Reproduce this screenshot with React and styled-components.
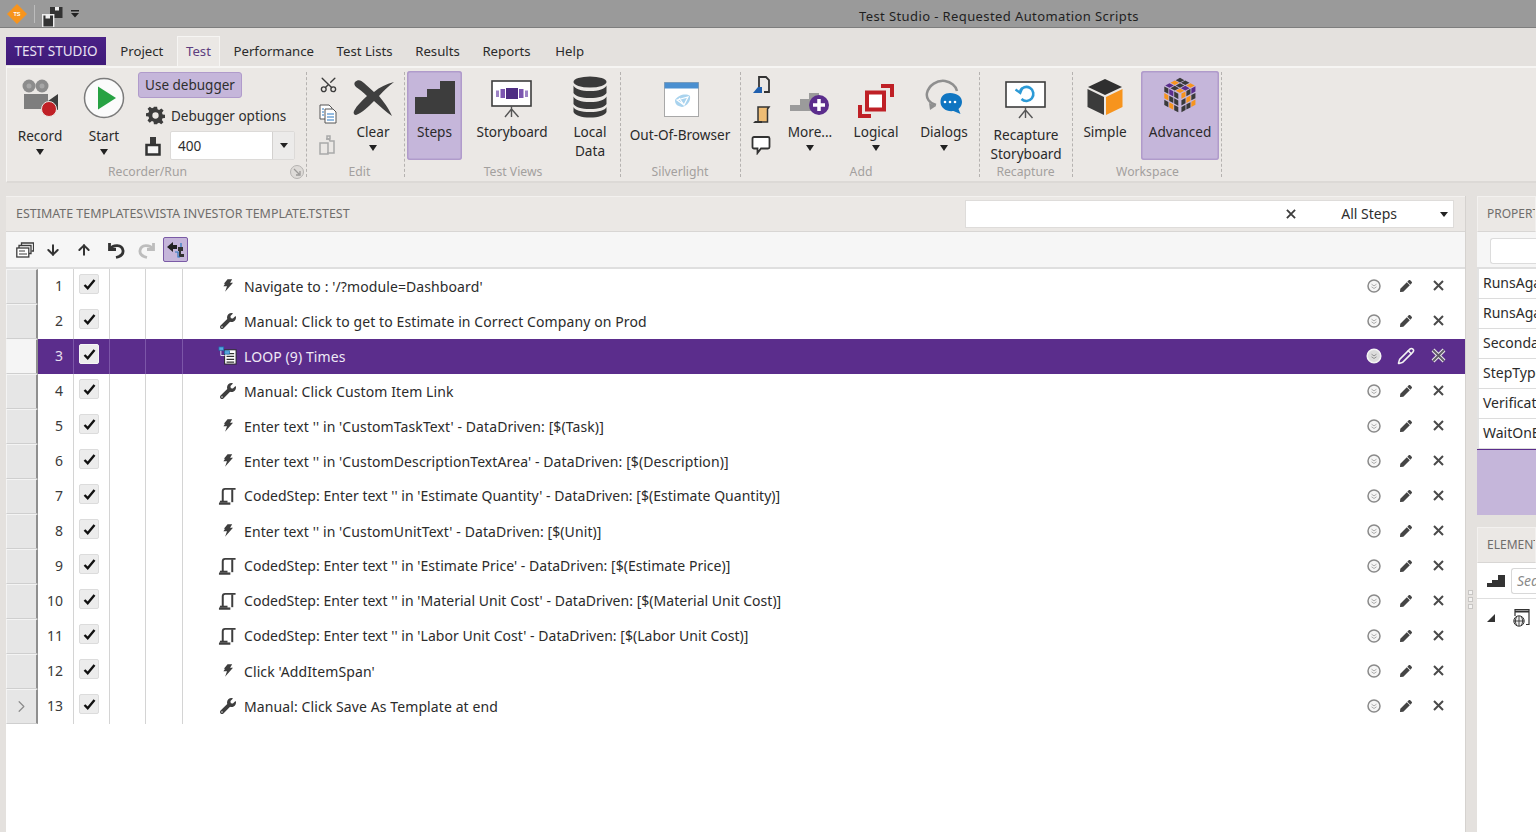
import React from "react";
import styled, { createGlobalStyle } from "styled-components";
import { FaWrench, FaPen } from "react-icons/fa";
import { ArrowDown, ArrowUp, Pencil, Scissors, ChevronRight } from "lucide-react";

const Global = createGlobalStyle`
  html, body { margin: 0; padding: 0; height: 100%; overflow: hidden; }
  body { font-family: "Noto Sans", "Open Sans", sans-serif; color: #2e2e2e; background: #e4e1de; }
  #root { height: 100%; }
`;

const Page = styled.div`height: 832px; width: 1536px; display: flex; flex-direction: column; overflow: hidden; background: #e4e1de;`;

const TitleBar = styled.div`height: 28px; flex: none; box-sizing: border-box; background: #9a9a9a; border-bottom: 1px solid #7e7e7e; display: flex; align-items: center; padding-left: 7px; overflow: hidden;`;
const QuickTools = styled.div`display: flex; align-items: center; gap: 7px; width: 852px; flex: none; height: 100%;`;
const QuickDivider = styled.div`width: 1px; height: 18px; background: #bcbcbc;`;
const SaveSlot = styled.div`display: flex; margin-top: 7px;`;
const Title = styled.div`font-size: 13px; color: #1f1f1f; letter-spacing: 0.4px; white-space: nowrap; margin-top: 4px;`;

const Tabs = styled.div`height: 38px; flex: none; padding: 8px 0 0 6px; box-sizing: border-box; display: flex; align-items: stretch;`;
const AppTab = styled.div`width: 100px; height: 28px; margin-top: 1px; background: linear-gradient(#4a2186, #3f1a78); color: #e9e2f2; font-size: 13.5px; display: flex; align-items: center; justify-content: center; box-sizing: border-box; margin-right: 3px;`;
const Tab = styled.div`height: 30px; box-sizing: border-box; padding: 0 ${p => (p.$active ? 8 : 10.3)}px; margin: 0 ${p => (p.$active ? 2.3 : 0)}px; margin-left: ${p => p.$ml || (p.$active ? 2.3 : 0)}px; font-size: 13.2px; line-height: 29px; white-space: nowrap; color: ${p => (p.$active ? "#5e3f80" : "#2b2b2b")}; background: ${p => (p.$active ? "#ebe8e5" : "transparent")}; border: 1px solid ${p => (p.$active ? "#f6f5f3" : "transparent")}; border-bottom: 0;`;

const Ribbon = styled.div`height: 117px; flex: none; margin: 0 0 0 6px; box-sizing: border-box; background: #ebe8e5; border-top: 2px solid #f6f5f3; border-bottom: 2px solid #dcd9d6; border-left: 1px solid #f6f5f3; display: flex; align-items: stretch;`;
const Group = styled.div`position: relative; width: ${p => p.$w}px; box-sizing: border-box; flex: none; padding: 3px 0 0 ${p => p.$pl || 0}px; display: flex; flex-direction: column; &::after { content: ""; position: absolute; right: 0; top: 4px; bottom: 4px; border-right: 1px dashed #b5b2b0; }`;
const GroupBody = styled.div`display: flex; height: 89px; gap: ${p => p.$gap || 0}px; flex: none;`;
const Caption = styled.div`text-align: center; font-size: 12.2px; color: #a3a09e; line-height: 16px; margin-top: 4px; padding-right: ${p => p.$pr || 0}px; white-space: nowrap;`;
const Launcher = styled.div`position: absolute; right: 3px; bottom: 2px; width: 14px; height: 14px; border-radius: 50%; border: 1px solid #b5b3b1; background: #dedbd8; box-sizing: border-box; display: flex; align-items: center; justify-content: center;`;

const Large = styled.div`width: ${p => p.$w}px; flex: none; height: 89px; box-sizing: border-box; display: flex; flex-direction: column; align-items: center; border-radius: 3px; margin-right: ${p => p.$mr || 0}px; background: ${p => (p.$active ? "#c5b6da" : "transparent")}; box-shadow: ${p => (p.$active ? "inset 0 0 0 1.5px #b09bcb" : "none")};`;
const IconSlot = styled.div`height: ${p => 51 + (p.$drop || 0)}px; flex: none; width: 100%; display: flex; align-items: center; justify-content: center; padding-bottom: ${p => p.$lift || 0}px; padding-top: ${p => p.$sink || 0}px; padding-left: ${p => p.$shift || 0}px; box-sizing: border-box;`;
const Label = styled.div`font-size: 13.6px; line-height: 19px; text-align: center; white-space: nowrap; color: #2a2a2a;`;
const Caret = styled.div`width: 0; height: 0; border-left: 4.5px solid transparent; border-right: 4.5px solid transparent; border-top: 6px solid #222; margin-top: 4px;`;

const SmallColumn = styled.div`width: ${p => p.$w}px; flex: none; display: flex; flex-direction: column; align-items: center; gap: 10px; padding-top: 4px;`;
const DebugColumn = styled.div`width: 160px; display: flex; flex-direction: column; align-items: flex-start; padding-top: 1px;`;
const UseDebugger = styled.div`height: 27px; width: 104px; box-sizing: border-box; background: #c5b6da; border: 1.5px solid #b09bcb; border-radius: 3px; font-size: 13.5px; line-height: 24px; text-align: center;`;
const OptionRow = styled.div`display: flex; align-items: center; gap: 6px; font-size: 13.5px; margin: 7px 0 0 8px; height: 22px; white-space: nowrap;`;
const SpinRow = styled.div`display: flex; align-items: center; gap: 9px; margin: 5px 0 0 7px;`;
const Spin = styled.div`width: 125px; height: 29px; box-sizing: border-box; background: #fff; border: 1px solid #dcdad8; border-radius: 2px; display: flex; font-size: 13.6px; line-height: 27px;`;
const SpinValue = styled.div`flex: 1; padding-left: 7px;`;
const SpinButton = styled.div`width: 21px; background: #ecebea; border-left: 1px solid #d3d1cf; display: flex; align-items: center; justify-content: center;`;
const SmallCaret = styled.div`width: 0; height: 0; border-left: 4px solid transparent; border-right: 4px solid transparent; border-top: 5px solid #222;`;

const Workspace = styled.div`flex: 1; min-height: 0; display: flex; padding: 13px 0 0 6px; gap: 11px;`;
const MainPanel = styled.div`width: 1459px; flex: none; background: #fff; display: flex; flex-direction: column; border-right: 1px solid #d5d2cf;`;
const PanelHead = styled.div`height: 36px; flex: none; box-sizing: border-box; background: #ebe8e5; border-bottom: 1px solid #d8d6d4; display: flex; align-items: center; justify-content: space-between; padding: 0 10px; border-top: 1px solid #f3f1ef;`;
const Path = styled.div`font-size: 12.45px; color: #6f6d6b; white-space: nowrap; margin-top: -2px;`;
const Filter = styled.div`width: 489px; height: 28px; box-sizing: border-box; background: #fff; border: 1px solid #dedcda; display: flex; align-items: center; font-size: 14px; padding-right: 5px; margin-right: 1px;`;
const FilterSpacer = styled.div`flex: 1;`;
const FilterText = styled.div`margin: -1px 43px 0 45px;`;
const Toolbar = styled.div`height: 37px; flex: none; box-sizing: border-box; background: #f6f6f6; border-bottom: 2px solid #dfdfdf; display: flex; align-items: center; padding-left: 8px;`;
const ToolButton = styled.div`width: ${p => p.$w || 31}px; height: 25px; display: flex; align-items: center; justify-content: center; box-sizing: border-box; margin-left: ${p => p.$ml || 0}px; background: ${p => (p.$active ? "#c5b6da" : "transparent")}; border: ${p => (p.$active ? "1.5px solid #7a5aa6" : "0")}; border-radius: 2px;`;

const Rows = styled.div`display: flex; flex-direction: column;`;
const Row = styled.div`height: 35px; display: grid; grid-template-columns: 32px 36px 36px 36px 37px 1fr 100px; color: ${p => (p.$selected ? "#efe9f6" : "#2b2b2b")};`;
const Handle = styled.div`background: ${p => (p.$selected ? "#f5f5f5" : "#e6e6e6")}; border: 1px solid #f4f4f4; border-right: 2px solid #8f8f8f; box-sizing: border-box; border-bottom: 1px solid #cfcfcf; display: flex; align-items: center; justify-content: center; color: #8b8b8b;`;
const Cell = styled.div`box-sizing: border-box; border-right: 1px solid ${p => (p.$selected ? "#7c56a8" : "#d4d4d4")}; background: ${p => (p.$selected ? "#5b2d8c" : "#fff")}; display: flex; align-items: center;`;
const Num = styled(Cell)`justify-content: flex-end; padding: 0 10px 2px 0; font-size: 14px; color: ${p => (p.$selected ? "#e8e0f0" : "#3a3a3a")};`;
const CheckCell = styled(Cell)`justify-content: center; padding-right: 5px;`;
const Box = styled.div`width: 20px; height: 20px; box-sizing: border-box; background: #ececec; border: 1px solid ${p => (p.$selected ? "#f6f6f6" : "#dcdcdc")}; border-radius: 2px; display: flex; align-items: center; justify-content: center; margin-bottom: 5px;`;
const Content = styled.div`background: ${p => (p.$selected ? "#5b2d8c" : "#fff")}; display: flex; align-items: center; padding-left: 35px; font-size: 14px; white-space: nowrap; min-width: 0;`;
const StepIcon = styled.div`width: 19px; height: 20px; display: flex; align-items: center; justify-content: center; margin-right: 7px; margin-bottom: 2px; flex: none;`;
const StepText = styled.div`position: relative; top: ${p => (p.$coded ? -1 : 0)}px; letter-spacing: ${p => (p.$coded ? 0.03 : 0.1)}px;`;
const Actions = styled.div`background: ${p => (p.$selected ? "#5b2d8c" : "#fff")}; display: grid; grid-template-columns: 33px 32px 33px; align-items: center; justify-items: center; padding: 0 10px 2px 0; margin-left: -8px;`;
const Filler = styled.div`flex: 1;`;

const Splitter = styled.div`position: absolute; left: 1468px; top: 590px; display: flex; flex-direction: column; gap: 2px;`;
const Dot = styled.div`width: 5px; height: 5px; box-sizing: border-box; border: 1px solid #c8c6c4; background: #f4f3f2;`;

const Side = styled.div`flex: 1; min-width: 0; display: flex; flex-direction: column; overflow: hidden;`;
const SideHead = styled.div`height: 36px; box-sizing: border-box; flex: none; background: #ebe8e5; border: 1px solid #f3f1ef; border-bottom: 1px solid #d8d6d4; font-size: 12px; line-height: 34px; padding-left: 9px; color: #6f6d6b; white-space: nowrap; overflow: hidden;`;
const SideSearch = styled.div`height: 37px; box-sizing: border-box; flex: none; background: #f6f6f6; border-bottom: 2px solid #dfdfdf; padding: 6px 0 0 13px; display: flex; align-items: flex-start;`;
const SideInput = styled.div`flex: 1; height: 26px; box-sizing: border-box; background: #fff; border: 1px solid #dcdcdc; border-right: 0; border-radius: 3px 0 0 3px;`;
const PropRow = styled.div`height: 30px; box-sizing: border-box; background: #fff; border-bottom: 1px solid #dcdcdc; border-left: 2px solid #e3e3e3; padding-left: 4px; font-size: 14px; line-height: 28px; white-space: nowrap; overflow: hidden; color: #2b2b2b;`;
const PropDesc = styled.div`height: 66px; flex: none; background: #c5b6da; border-top: 1px solid #5b2d8c; box-sizing: border-box;`;
const ElementsGap = styled.div`height: 12px; flex: none;`;
const ElSearch = styled.div`height: 36px; flex: none; box-sizing: border-box; background: #fff; border-bottom: 1px solid #dfdfdf; display: flex; align-items: center; gap: 6px; padding-left: 10px;`;
const ElInput = styled.div`flex: 1; height: 26px; box-sizing: border-box; border: 1px solid #d8d8d8; border-right: 0; border-radius: 3px 0 0 3px; font-size: 14px; font-style: italic; color: #8a8a8a; line-height: 24px; padding-left: 5px; white-space: nowrap; overflow: hidden;`;
const Tree = styled.div`flex: 1; background: #fff; display: flex; padding: 9px 0 0 9px; gap: 16px; align-items: flex-start;`;
const TreeArrowSlot = styled.div`padding-top: 5px; display: flex;`;

const RecordIcon = () => (
  <svg width="42" height="42" viewBox="0 0 42 42">
    <circle cx="10" cy="9" r="6.5" fill="#8c8c8c" /><circle cx="10" cy="9" r="2.5" fill="#a7a7a7" />
    <circle cx="23" cy="9" r="6.5" fill="#8c8c8c" /><circle cx="23" cy="9" r="2.5" fill="#a7a7a7" />
    <rect x="5" y="17" width="24" height="15" fill="#7e7e7e" />
    <path d="M29 24l10-7v16l-10-5z" fill="#3d3d3d" />
    <circle cx="30" cy="32" r="7.5" fill="#c02026" stroke="#e9e6e3" />
  </svg>
);
const StartIcon = () => (
  <svg width="42" height="42" viewBox="0 0 42 42">
    <circle cx="21" cy="21" r="19.5" fill="#fbfbfb" stroke="#7b7b7b" strokeWidth="1.5" />
    <path d="M15 9.5L33 21 15 32.5z" fill="#27a243" />
  </svg>
);
const Gear = () => (
  <svg width="19" height="19" viewBox="0 0 24 24"><path fill="#3c3c3c" fillRule="evenodd" d="M10 1h4l.6 3.2 2 .9L19.4 3l2.8 2.8-2 2.8.8 2 3 .5v4l-3.1.5-.8 2 1.9 2.8-2.8 2.8-2.8-2-2 .8L14 23h-4l-.5-3.1-2-.8-2.8 1.9L1.9 18.2l2-2.8-.8-2L0 13V9l3.1-.6.8-2L2 3.6 4.8.8l2.8 2 2-.8zM12 8a4 4 0 100 8 4 4 0 000-8z" /></svg>
);
const Stamp = () => (
  <svg width="16" height="20" viewBox="0 0 16 20"><rect x="5" y="1" width="6" height="8" fill="#3a3a3a" /><rect x="1.5" y="9" width="13" height="9.5" fill="#f5f5f5" stroke="#333" strokeWidth="2.5" /></svg>
);
const CopyIcon = () => (
  <svg width="20" height="20" viewBox="0 0 20 20"><path d="M2 1h9l3 3v11H2z" fill="#fff" stroke="#555" /><path d="M7 5h8l3 3v11H7z" fill="#fff" stroke="#555" /><path d="M4 5h2M4 8h2M4 11h2M9 10h7M9 13h7M9 16h7" stroke="#2b78c2" strokeWidth="1.2" /></svg>
);
const PasteIcon = () => (
  <svg width="20" height="22" viewBox="0 0 20 22" fill="none" stroke="#a9a9a9" strokeWidth="1.5"><path d="M8 5h3l1 2h4v12H9" /><path d="M9 2h3v3H9z" /><rect x="2" y="9" width="8" height="11" /></svg>
);
const ClearIcon = () => (
  <svg width="42" height="42" viewBox="0 0 42 42"><path d="M2 6c3-3 6-2 9 1l10 9c6-5 12-8 20-10-6 5-11 9-15 14 4 5 9 11 13 20-6-4-12-10-18-15C15 31 9 37 3 39c-2 0-3-2-2-4 3-6 8-10 13-15C10 16 6 13 3 11 1 9 1 7 2 6z" fill="#3f3f3f" /></svg>
);
const StepsIcon = () => (
  <svg width="40" height="33" viewBox="0 0 40 33"><path d="M0 33V16h12V8h13V0h15v33z" fill="#3d3d3d" /></svg>
);
const Storyboard = ({ inner }) => (
  <svg width="42" height="38" viewBox="0 0 42 38">
    <rect x="1" y="1" width="39" height="25" fill="#fff" stroke="#3d3d3d" strokeWidth="1.6" />
    <path d="M20.5 26v3L14 37M20.5 29l7 8M20.5 29v8" stroke="#555" strokeWidth="1.4" fill="none" />
    {inner}
  </svg>
);
const Frames = (
  <g>
    <rect x="15" y="8" width="12" height="11" fill="#4e2d83" />
    <rect x="9.5" y="9" width="4.5" height="9" fill="#7c56b0" /><rect x="28" y="9" width="4.5" height="9" fill="#7c56b0" />
    <rect x="5" y="10.5" width="3" height="6.5" fill="#9d83c5" /><rect x="34" y="10.5" width="3" height="6.5" fill="#9d83c5" />
  </g>
);
const Circular = (
  <g fill="none" stroke="#2c9ad6" strokeWidth="2.6"><path d="M15 10a7 7 0 1 1 1.5 8" /><path d="M10.5 8.5l4.8 3.5 2-5" strokeWidth="2.2" /></g>
);
const DataIcon = () => (
  <svg width="34" height="42" viewBox="0 0 34 42" fill="#3a3a3a">
    <ellipse cx="17" cy="6" rx="16.5" ry="5.5" />
    <path d="M.5 9.5C2 13 8 15 17 15s15-2 16.5-5.5V17c-1.5 3-8 5-16.5 5S2 20 .5 17z" />
    <path d="M.5 20.5C2 24 8 26 17 26s15-2 16.5-5.5V28c-1.5 3-8 5-16.5 5S2 31 .5 28z" />
    <path d="M.5 31C2 34.5 8 36 17 36s15-1.5 16.5-5v5c-1.5 3.5-8 5.5-16.5 5.5S2 39.5.5 36z" />
  </svg>
);
const SilverIcon = () => (
  <svg width="36" height="36" viewBox="0 0 36 36">
    <rect x=".5" y=".5" width="34" height="34" fill="#fff" stroke="#a8a8a8" />
    <rect x=".5" y=".5" width="34" height="6" fill="#4a8fd0" />
    <path d="M11 18c3-5 11-7 15-4 1 5-3 10-8 11-5-1-7-3-7-7z" fill="#a9d3ee" />
    <path d="M13 18l11-3-4 8zM15 16l5 7" stroke="#fff" strokeWidth="1.2" fill="none" />
  </svg>
);
const DocNote = () => (
  <svg width="19" height="20" viewBox="0 0 19 20"><path d="M7 12V2h7l3 3v12h-5" fill="none" stroke="#333" strokeWidth="1.8" /><path d="M1 18l5-6h4v6z" fill="#1f5fae" /></svg>
);
const ScrollColor = () => (
  <svg width="19" height="20" viewBox="0 0 19 20"><path d="M6 2h11l-1.5 2v13H6z" fill="#efbd74" stroke="#333" strokeWidth="1.5" /><path d="M1 18h9v-2H3z" fill="#333" /></svg>
);
const Bubble = () => (
  <svg width="20" height="20" viewBox="0 0 20 20"><path d="M3 2h14a1.5 1.5 0 0 1 1.5 1.5V12a1.5 1.5 0 0 1-1.5 1.5h-7L6.5 18v-4.5H3A1.5 1.5 0 0 1 1.5 12V3.5A1.5 1.5 0 0 1 3 2z" fill="#fff" stroke="#333" strokeWidth="1.8" /></svg>
);
const MoreIcon = () => (
  <svg width="40" height="32" viewBox="0 0 40 32"><path d="M0 26v-6h10v-6h9V8h10v18z" fill="#9b9b9b" /><circle cx="29" cy="20" r="10" fill="#5b2d8c" /><path d="M29 14v12M23 20h12" stroke="#fff" strokeWidth="3.5" /></svg>
);
const LogicalIcon = () => (
  <svg width="38" height="36" viewBox="0 0 38 36">
    <path d="M24 1h13v13h-4V5h-9zM1 22h4v9h9v4H1z" fill="#bf2026" />
    <rect x="10" y="9.5" width="17" height="17" fill="#fff" stroke="#bf2026" strokeWidth="4" />
  </svg>
);
const DialogsIcon = () => (
  <svg width="38" height="38" viewBox="0 0 38 38">
    <path d="M11 26C4 24 1 19 2 14 4 6 12 1 20 2c6 1 11 5 12 10" fill="none" stroke="#8f8f8f" strokeWidth="2.5" />
    <path d="M4 24l1 7 6-4z" fill="#8f8f8f" />
    <path d="M25 14c7 0 12 3.5 12 9 0 3-1.5 5-3.5 7l2 5-7-3c-7 1-13-3-13-9s4-9 9.5-9z" fill="#0f75c1" />
    <circle cx="20" cy="23" r="1.3" fill="#fff" /><circle cx="25" cy="23" r="1.3" fill="#fff" /><circle cx="30" cy="23" r="1.3" fill="#fff" />
  </svg>
);
const SimpleIcon = () => (
  <svg width="38" height="38" viewBox="0 0 38 38">
    <path d="M19 1L36 9 19 17 2 9z" fill="#2f2f2f" />
    <path d="M1.5 11L18 19v18L1.5 29z" fill="#3b3b3b" />
    <path d="M36.5 11L20 19v18l16.5-8z" fill="#f7941d" />
  </svg>
);
const RubikIcon = () => {
  const cells = [];
  const colors = ["#3a3a3a", "#3a3a3a", "#f7941d", "#3a3a3a", "#5b2d8c", "#3a3a3a", "#f7941d", "#3a3a3a"];
  for (let r = 0; r < 3; r++) {
    for (let c = 0; c < 3; c++) {
      cells.push(<path key={`t${r}${c}`} d={`M${19 + (c - r) * 5.5} ${3 + (c + r) * 2.8}l4.5 2.4-4.5 2.4-4.5-2.4z`} fill={colors[(r * 2 + c) % 8]} />);
      cells.push(<path key={`l${r}${c}`} d={`M${2.5 + c * 5.2} ${12 + c * 2.7 + r * 7}l4.3 2.3v5.5l-4.3-2.3z`} fill={colors[(r + c * 3 + 1) % 8]} />);
      cells.push(<path key={`r${r}${c}`} d={`M${20.5 + c * 5.2} ${19.5 - c * 2.7 + r * 7}l4.3-2.3v5.5l-4.3 2.3z`} fill={colors[(r * 3 + c + 2) % 8]} />);
    }
  }
  return <svg width="38" height="40" viewBox="0 0 38 42">{cells}</svg>;
};
const SaveIcon = () => (
  <svg width="21" height="21" viewBox="0 0 21 21">
    <path d="M8 0h12.5v11H8z" fill="#333" /><rect x="13" y="0" width="4" height="3.5" fill="#eee" />
    <path d="M.7 7.7h11v12.6H.7z" fill="#333" stroke="#eee" strokeWidth="1.4" /><rect x="3.5" y="8" width="4.5" height="3.5" fill="#eee" />
  </svg>
);
const LogoIcon = () => (
  <svg width="20" height="20" viewBox="0 0 20 20"><path d="M10 0l10 10-10 10L0 10z" fill="#f7941d" /><text x="10" y="12" fontSize="5.5" fontWeight="700" fill="#fff" textAnchor="middle" fontFamily="Liberation Sans">TS</text></svg>
);
const DropMini = () => (
  <svg width="10" height="8" viewBox="0 0 10 8"><path d="M1 0h8v1.5H1zM1 3h8L5 7.5z" fill="#222" /></svg>
);
const XMark = ({ color = "#3c3c3c", size = 11, sw = 2 }) => (
  <svg width={size} height={size} viewBox="0 0 11 11"><path d="M1 1l9 9M10 1l-9 9" stroke={color} strokeWidth={sw} /></svg>
);
const XOutlined = () => (
  <svg width="15" height="15" viewBox="0 0 15 15"><path d="M2 2l11 11M13 2L2 13" stroke="#e8e8e8" strokeWidth="4" /><path d="M2 2l11 11M13 2L2 13" stroke="#5f5a68" strokeWidth="1.8" /></svg>
);
const Bolt = () => (
  <svg width="10" height="13" viewBox="0 0 12 15"><path d="M5.5 0H11L8.5 4.2H12L2.5 15l2.3-6.5H.5l2-3H1z" fill="#3e3e3e" /></svg>
);
const Coded = () => (
  <svg width="20" height="20" viewBox="0 0 20 20" fill="none" stroke="#3e3e3e" strokeWidth="2.1"><path d="M5 16V5c0-1.5.7-2.5 2.5-2.5h11" /><path d="M15 3v13.5" /><path d="M1 18h12" strokeWidth="2.4" /><path d="M2 16h8" /></svg>
);
const LoopIcon = () => (
  <svg width="21" height="21" viewBox="0 0 20 20"><rect x="7" y="4" width="12" height="15" fill="#fff" stroke="#222" /><path d="M9 8h8M9 11h8M9 14h8M9 17h8" stroke="#333" strokeWidth="1.3" /><rect x="1" y="1" width="5" height="3.5" fill="#58a9e0" stroke="#1e6cab" strokeWidth=".8" /><rect x="7" y="5" width="5" height="3.5" fill="#58a9e0" stroke="#1e6cab" strokeWidth=".8" /><path d="M3 5v5h4" stroke="#dfe9f4" fill="none" /></svg>
);
const Remind = ({ selected }) => (
  <svg width="16" height="16" viewBox="0 0 16 16">
    <circle cx="8" cy="8" r={selected ? 6.8 : 6} fill={selected ? "#dcdcdc" : "#f6f6f6"} stroke={selected ? "#f4f4f4" : "#8a8a8a"} strokeWidth="1.5" />
    <path d="M5.5 6.2L8 7.9l2.5-1.7M5.5 8.8L8 10.5l2.5-1.7" fill="none" stroke={selected ? "#8a8a8a" : "#a6a6a6"} strokeWidth=".9" />
  </svg>
);
const LevelIcon = () => (
  <svg width="18" height="12" viewBox="0 0 18 12"><path d="M0 12V8h5V5h6V0h7v12z" fill="#333" /></svg>
);
const WebIcon = () => (
  <svg width="19" height="19" viewBox="0 0 19 19" fill="none" stroke="#333"><path d="M3 8V1.5h14v15h-3" strokeWidth="1.2" /><path d="M3 3.5h14" strokeWidth="2" /><circle cx="7" cy="13" r="5.2" fill="#eee" /><path d="M2 13h10M7 8v10M4.5 9c-1.5 2.5-1.5 5.5 0 8M9.5 9c1.5 2.5 1.5 5.5 0 8" strokeWidth=".9" /></svg>
);
const TreeArrow = () => (
  <svg width="10" height="10" viewBox="0 0 10 10"><path d="M9 1v8H1z" fill="#333" /></svg>
);
const LevelTool = () => (
  <svg width="20" height="20" viewBox="0 0 20 20"><path d="M1 7l6-5v3h4v4H7v3z" fill="#222" /><path d="M12 7h5v4h-2v3h3v3h-5v-6h-1z" fill="#333" /><path d="M9 12h3v5h2M15 3v4" stroke="#2c78c0" strokeWidth="1.2" fill="none" /></svg>
);
const FramesTool = () => (
  <svg width="18" height="16" viewBox="0 0 18 16" fill="#fff" stroke="#3c3c3c" strokeWidth="1.3"><path d="M5.5 3.5V1h12v8h-2" /><path d="M3 6V3.5h12v8h-2" /><rect x=".8" y="6" width="12" height="9" /><path d="M3 9h6M3 12h8" strokeWidth="1" /></svg>
);
const UndoIcon = ({ color, flip }) => (
  <svg width="20" height="20" viewBox="0 0 20 20" fill="none" stroke={color} strokeWidth="2.8" style={flip ? { transform: "scaleX(-1)" } : undefined}>
    <path d="M3.5 3v6.5H10" /><path d="M4 9c3-4.5 12-5 13 1.5.5 3.5-2.5 6-7 7" />
  </svg>
);

const IconFor = ({ kind }) => {
  if (kind === "bolt") return <Bolt />;
  if (kind === "wrench") return <FaWrench size={16} color="#3e3e3e" />;
  if (kind === "coded") return <Coded />;
  return <LoopIcon />;
};

const steps = [
  ["bolt", "Navigate to : '/?module=Dashboard'"],
  ["wrench", "Manual: Click to get to Estimate in Correct Company on Prod"],
  ["loop", "LOOP (9) Times"],
  ["wrench", "Manual: Click Custom Item Link"],
  ["bolt", "Enter text '' in 'CustomTaskText' - DataDriven: [$(Task)]"],
  ["bolt", "Enter text '' in 'CustomDescriptionTextArea' - DataDriven: [$(Description)]"],
  ["coded", "CodedStep: Enter text '' in 'Estimate Quantity' - DataDriven: [$(Estimate Quantity)]"],
  ["bolt", "Enter text '' in 'CustomUnitText' - DataDriven: [$(Unit)]"],
  ["coded", "CodedStep: Enter text '' in 'Estimate Price' - DataDriven: [$(Estimate Price)]"],
  ["coded", "CodedStep: Enter text '' in 'Material Unit Cost' - DataDriven: [$(Material Unit Cost)]"],
  ["coded", "CodedStep: Enter text '' in 'Labor Unit Cost' - DataDriven: [$(Labor Unit Cost)]"],
  ["bolt", "Click 'AddItemSpan'"],
  ["wrench", "Manual: Click Save As Template at end"],
];

const Step = ({ n, kind, text }) => {
  const selected = n === 3;
  return (
    <Row $selected={selected}>
      <Handle $selected={selected}>{n === 13 && <ChevronRight size={19} strokeWidth={1.5} />}</Handle>
      <Num $selected={selected}>{n}</Num>
      <CheckCell $selected={selected}>
        <Box $selected={selected}>
          <svg width="13" height="11" viewBox="0 0 13 11"><path d="M1.5 6l3.2 3.2L11.5 1" fill="none" stroke="#111" strokeWidth="2.4" /></svg>
        </Box>
      </CheckCell>
      <Cell $selected={selected} />
      <Cell $selected={selected} />
      <Content $selected={selected}>
        <StepIcon><IconFor kind={kind} /></StepIcon>
        <StepText $coded={kind === "coded"}>{text}</StepText>
      </Content>
      <Actions $selected={selected}>
        <Remind selected={selected} />
        {selected ? <Pencil size={18} color="#f2f2f2" strokeWidth={2} /> : <FaPen size={12} color="#454545" />}
        {selected ? <XOutlined /> : <XMark color="#4a4a4a" />}
      </Actions>
    </Row>
  );
};

export default function App() {
  return (
    <Page>
      <Global />
      <TitleBar>
        <QuickTools>
          <LogoIcon />
          <QuickDivider />
          <SaveSlot><SaveIcon /></SaveSlot>
          <DropMini />
        </QuickTools>
        <Title>Test Studio - Requested Automation Scripts</Title>
      </TitleBar>

      <Tabs>
        <AppTab>TEST STUDIO</AppTab>
        <Tab>Project</Tab>
        <Tab $active>Test</Tab>
        <Tab>Performance</Tab>
        <Tab>Test Lists</Tab>
        <Tab>Results</Tab>
        <Tab>Reports</Tab>
        <Tab $ml={2}>Help</Tab>
      </Tabs>

      <Ribbon>
        <Group $w={300} $pl={3}>
          <GroupBody>
            <Large $w={60} $mr={4}>
              <IconSlot $drop={4} $lift={2}><RecordIcon /></IconSlot>
              <Label>Record</Label><Caret />
            </Large>
            <Large $w={60} $mr={4}>
              <IconSlot $drop={4} $lift={2}><StartIcon /></IconSlot>
              <Label>Start</Label><Caret />
            </Large>
            <DebugColumn>
              <UseDebugger>Use debugger</UseDebugger>
              <OptionRow><Gear />Debugger options</OptionRow>
              <SpinRow>
                <Stamp />
                <Spin>
                  <SpinValue>400</SpinValue>
                  <SpinButton><SmallCaret /></SpinButton>
                </Spin>
              </SpinRow>
            </DebugColumn>
          </GroupBody>
          <Caption $pr={22}>Recorder/Run</Caption>
          <Launcher>
            <svg width="8" height="8" viewBox="0 0 8 8"><path d="M1 1l5 5M7 3v4H3" stroke="#9b9997" strokeWidth="1.3" fill="none" /></svg>
          </Launcher>
        </Group>

        <Group $w={98} $pl={8}>
          <GroupBody $gap={7}>
            <SmallColumn $w={26}>
              <Scissors size={19} strokeWidth={1.7} color="#3c3c3c" style={{ transform: "rotate(-90deg)" }} />
              <CopyIcon />
              <PasteIcon />
            </SmallColumn>
            <Large $w={50}>
              <IconSlot $sink={1} $shift={2}><ClearIcon /></IconSlot>
              <Label>Clear</Label><Caret />
            </Large>
          </GroupBody>
          <Caption $pr={1}>Edit</Caption>
        </Group>

        <Group $w={216} $pl={2}>
          <GroupBody>
            <Large $w={55} $active $mr={5}>
              <IconSlot $sink={2}><StepsIcon /></IconSlot>
              <Label>Steps</Label>
            </Large>
            <Large $w={90} $mr={8}>
              <IconSlot $sink={4}><Storyboard inner={Frames} /></IconSlot>
              <Label>Storyboard</Label>
            </Large>
            <Large $w={50}>
              <IconSlot><DataIcon /></IconSlot>
              <Label>Local<br />Data</Label>
            </Large>
          </GroupBody>
          <Caption $pr={2}>Test Views</Caption>
        </Group>

        <Group $w={120} $pl={4}>
          <GroupBody>
            <Large $w={110}>
              <IconSlot $drop={3} $sink={3} $shift={3}><SilverIcon /></IconSlot>
              <Label>Out-Of-Browser</Label>
            </Large>
          </GroupBody>
          <Caption $pr={6}>Silverlight</Caption>
        </Group>

        <Group $w={239} $pl={7}>
          <GroupBody $gap={6}>
            <SmallColumn $w={26}>
              <DocNote />
              <ScrollColor />
              <Bubble />
            </SmallColumn>
            <Large $w={60}>
              <IconSlot $sink={9}><MoreIcon /></IconSlot>
              <Label>More...</Label><Caret />
            </Large>
            <Large $w={60} $mr={2}>
              <IconSlot $sink={8}><LogicalIcon /></IconSlot>
              <Label>Logical</Label><Caret />
            </Large>
            <Large $w={60}>
              <IconSlot $sink={2}><DialogsIcon /></IconSlot>
              <Label>Dialogs</Label><Caret />
            </Large>
          </GroupBody>
          <Caption $pr={6}>Add</Caption>
        </Group>

        <Group $w={93}>
          <GroupBody>
            <Large $w={92}>
              <IconSlot $drop={3} $sink={4}><Storyboard inner={Circular} /></IconSlot>
              <Label>Recapture<br />Storyboard</Label>
            </Large>
          </GroupBody>
          <Caption $pr={2}>Recapture</Caption>
        </Group>

        <Group $w={149} $pl={4}>
          <GroupBody>
            <Large $w={56} $mr={8}>
              <IconSlot><SimpleIcon /></IconSlot>
              <Label>Simple</Label>
            </Large>
            <Large $w={78} $active>
              <IconSlot $lift={3}><RubikIcon /></IconSlot>
              <Label>Advanced</Label>
            </Large>
          </GroupBody>
          <Caption $pr={4}>Workspace</Caption>
        </Group>
      </Ribbon>

      <Workspace>
        <MainPanel>
          <PanelHead>
            <Path>ESTIMATE TEMPLATES\VISTA INVESTOR TEMPLATE.TSTEST</Path>
            <Filter>
              <FilterSpacer />
              <XMark size={10} />
              <FilterText>All Steps</FilterText>
              <svg width="8" height="5" viewBox="0 0 8 5"><path d="M0 0h8L4 5z" fill="#222" /></svg>
            </Filter>
          </PanelHead>
          <Toolbar>
            <ToolButton $w={22}><FramesTool /></ToolButton>
            <ToolButton $ml={1}><ArrowDown size={16} strokeWidth={3} color="#333" /></ToolButton>
            <ToolButton><ArrowUp size={16} strokeWidth={3} color="#333" /></ToolButton>
            <ToolButton $ml={1}><UndoIcon color="#333" /></ToolButton>
            <ToolButton><UndoIcon color="#bdbdbd" flip /></ToolButton>
            <ToolButton $active $w={25} $ml={1}><LevelTool /></ToolButton>
          </Toolbar>
          <Rows>
            {steps.map(([kind, text], i) => <Step key={i} n={i + 1} kind={kind} text={text} />)}
          </Rows>
          <Filler />
        </MainPanel>

        <Splitter><Dot /><Dot /><Dot /></Splitter>

        <Side>
          <SideHead>PROPERTIES</SideHead>
          <SideSearch><SideInput /></SideSearch>
          <PropRow>RunsAgainstVersion</PropRow>
          <PropRow>RunsAgainst</PropRow>
          <PropRow>SecondaryTarget</PropRow>
          <PropRow>StepType</PropRow>
          <PropRow>Verification</PropRow>
          <PropRow>WaitOnElements</PropRow>
          <PropDesc />
          <ElementsGap />
          <SideHead>ELEMENTS</SideHead>
          <ElSearch><LevelIcon /><ElInput>Search</ElInput></ElSearch>
          <Tree><TreeArrowSlot><TreeArrow /></TreeArrowSlot><WebIcon /></Tree>
        </Side>
      </Workspace>
    </Page>
  );
}
